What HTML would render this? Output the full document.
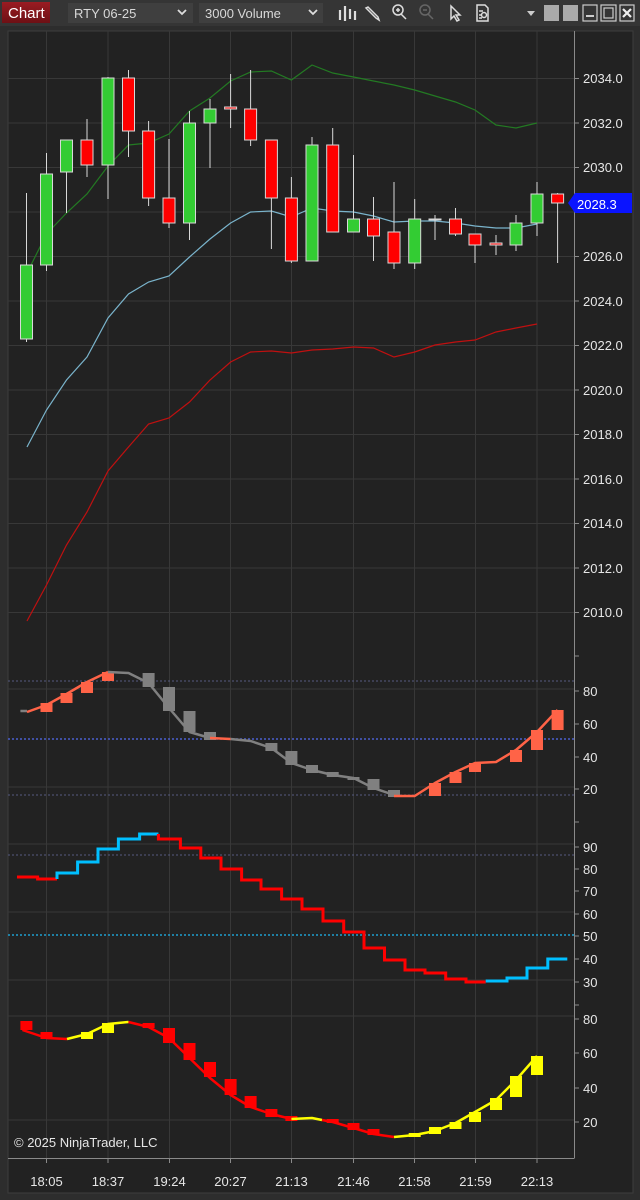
<!DOCTYPE html>
<html><head><meta charset="utf-8"><style>
html,body{margin:0;padding:0;width:640px;height:1200px;overflow:hidden;background:#2c2c2c;font-family:"Liberation Sans",sans-serif}
svg{display:block}
</style></head><body>
<svg width="640" height="1200" viewBox="0 0 640 1200" xmlns="http://www.w3.org/2000/svg" font-family="Liberation Sans, sans-serif">
<rect x="0" y="0" width="640" height="1200" fill="#2d2d2d"/>
<!-- toolbar -->
<rect x="0" y="0" width="640" height="26" fill="#353535"/>
<defs><linearGradient id="cg" x1="0" y1="0" x2="0" y2="1"><stop offset="0" stop-color="#9a1c22"/><stop offset="1" stop-color="#6e1015"/></linearGradient></defs>
<rect x="2" y="2" width="48" height="21" fill="url(#cg)"/>
<text x="8" y="18" font-size="15" fill="#fff">Chart</text>
<rect x="68" y="3" width="125" height="20" fill="#3f3f3f"/>
<text x="74" y="18" font-size="13" fill="#d8d8d8">RTY 06-25</text>
<path d="M178 10 l4 4 l4 -4" stroke="#ddd" stroke-width="1.8" fill="none"/>
<rect x="199" y="3" width="124" height="20" fill="#3f3f3f"/>
<text x="205" y="18" font-size="13" fill="#d8d8d8">3000 Volume</text>
<path d="M309 10 l4 4 l4 -4" stroke="#ddd" stroke-width="1.8" fill="none"/>
<g stroke="#ddd" fill="none" stroke-width="1.5">
<path d="M340 10v10M345 6v15M350 9v10M355 11v9" stroke-width="2.2"/>
<path d="M366 8l10 10l3 2l-1-3l-10-10z"/>
<circle cx="398" cy="10" r="5"/><path d="M401 14l5 5M396 10h4M398 8v4"/>
<g stroke="#666"><circle cx="425" cy="10" r="5"/><path d="M428 14l5 5M423 10h4"/></g>
<path d="M451 6v13l3-3l3 5l2-1l-3-5h4z"/>
<path d="M477 5h8l3 3v13h-11z"/><circle cx="484" cy="15" r="2.5"/><path d="M479 11h4M479 15h2M479 18h3"/>
</g>
<path d="M527 11h8l-4 5z" fill="#ccc"/>
<rect x="544" y="5" width="15" height="16" fill="#aaa"/>
<rect x="563" y="5" width="15" height="16" fill="#aaa"/>
<rect x="583" y="5" width="14" height="16" fill="none" stroke="#ccc" stroke-width="1.2"/><path d="M586 16h8" stroke="#ccc" stroke-width="2"/>
<rect x="601" y="5" width="15" height="16" fill="none" stroke="#ccc" stroke-width="1.2"/><rect x="604" y="8" width="9" height="10" fill="none" stroke="#ccc" stroke-width="1.2"/>
<rect x="620" y="5" width="14" height="16" fill="none" stroke="#ccc" stroke-width="1.2"/><path d="M623 9l8 8M631 9l-8 8" stroke="#eee" stroke-width="2.2"/>
<!-- chart frame -->
<rect x="8" y="31" width="625" height="1162" fill="#222222" stroke="#3d3d3d" stroke-width="1"/>
<!-- vertical grid -->
<g stroke="#383838" stroke-width="1">
<path d="M46.5 31V1158M108 31V1158M169.5 31V1158M230.5 31V1158M291.5 31V1158M353.5 31V1158M414.5 31V1158M475.5 31V1158M537 31V1158"/>
<!-- horizontal grid main -->
<path d="M8 78.5H574M8 123H574M8 167.5H574M8 212H574M8 256.5H574M8 301H574M8 345.5H574M8 390H574M8 434.5H574M8 479H574M8 523.5H574M8 568H574M8 612.5H574"/>
<path d="M8 689H574M8 787H574M8 844H574M8 912H574M8 980H574M8 1016H574M8 1120H574"/>
</g>
<path d="M574.5 31V1158M8 1158.5H574.5" stroke="#8a8a8a" stroke-width="1"/>
<!-- axis ticks -->
<g stroke="#8a8a8a"><path d="M574 78.5h5M574 123h5M574 167.5h5M574 212h5M574 256.5h5M574 301h5M574 345.5h5M574 390h5M574 434.5h5M574 479h5M574 523.5h5M574 568h5M574 612.5h5M574 656h5M574 691h5M574 724h5M574 757h5M574 789h5M574 822h5M574 847h5M574 869h5M574 891h5M574 914h5M574 936h5M574 959h5M574 982h5M574 1005h5M574 1019h5M574 1053h5M574 1088h5M574 1122h5"/>
<path d="M46.5 1158v5M108 1158v5M169.5 1158v5M230.5 1158v5M291.5 1158v5M353.5 1158v5M414.5 1158v5M475.5 1158v5M537 1158v5"/></g>
<g font-size="13" fill="#e6e6e6">
<text x="583" y="83">2034.0</text><text x="583" y="128">2032.0</text><text x="583" y="172">2030.0</text>
<text x="583" y="261">2026.0</text><text x="583" y="306">2024.0</text><text x="583" y="350">2022.0</text><text x="583" y="395">2020.0</text>
<text x="583" y="439">2018.0</text><text x="583" y="484">2016.0</text><text x="583" y="528">2014.0</text><text x="583" y="573">2012.0</text><text x="583" y="617">2010.0</text>
<text x="583" y="696">80</text><text x="583" y="729">60</text><text x="583" y="762">40</text><text x="583" y="794">20</text>
<text x="583" y="852">90</text><text x="583" y="874">80</text><text x="583" y="896">70</text><text x="583" y="919">60</text><text x="583" y="941">50</text><text x="583" y="964">40</text><text x="583" y="987">30</text>
<text x="583" y="1024">80</text><text x="583" y="1058">60</text><text x="583" y="1093">40</text><text x="583" y="1127">20</text>
</g>
<g font-size="13" fill="#e6e6e6" text-anchor="middle">
<text x="46.5" y="1186">18:05</text><text x="108" y="1186">18:37</text><text x="169.5" y="1186">19:24</text><text x="230.5" y="1186">20:27</text><text x="291.5" y="1186">21:13</text><text x="353.5" y="1186">21:46</text><text x="414.5" y="1186">21:58</text><text x="475.5" y="1186">21:59</text><text x="537" y="1186">22:13</text>
</g>
<!-- bands -->
<polyline fill="none" stroke="#237a23" stroke-width="1.2" points="27,273 46.5,234 66.5,213 87,194 108,166 128.5,145 148.6,143 169,134 189.5,111 210,98 230.6,81 250.6,72 271.4,71 291.4,80 312,65 332.7,73 353.5,77 373.5,81 394,85 414.7,90 435,96 455.5,102 475,110 496,125 516,128 537,123"/>
<polyline fill="none" stroke="#7ab4cc" stroke-width="1.2" points="27,447 46.5,410 66.5,380 87,357 108,318 128.5,294 148.6,282 169,276 189.5,257 210,239 230.6,223 250.6,212 271.4,211 291.4,217 312,208 332.7,211 353.5,212 373.5,216 394,222 414.7,221 435,221 455.5,223 475,226 496,228 516,228 537,224"/>
<polyline fill="none" stroke="#c01010" stroke-width="1.2" points="27,621 46.5,585 66.5,545 87,512 108,471 128.5,447 148.6,424 169,418 189.5,402 210,380 230.6,362 250.6,352 271.4,351 291.4,353 312,350 332.7,349 353.5,347 373.5,348 394,357 414.7,352 435,345 455.5,342 475,340 496,332 516,328 537,324"/>
<!-- candles -->
<g stroke="#d8d8d8" stroke-width="1">
<path d="M26.5 193V342M46.5 153V271M66.5 140V213M87 119V177M108 77V199M128.5 70V157M148.6 121V206M169 139V228M189.5 111V240M210 99V168M230.6 74V128M250.6 70V146M271.4 140V249M291.4 177V263M312 137V261M332.7 128V232M353.5 155V232M373.5 197V261M394 182V269M414.7 199V269M435 215V240M455.5 208V236M475 234V263M496 235V255M516 215V251M537 182V236M557.6 193V263"/>
<g fill="#33cc33"><rect x="20.5" y="265" width="12" height="74"/><rect x="40.5" y="174" width="12" height="91"/><rect x="60.5" y="140" width="12" height="32"/><rect x="102" y="78" width="12" height="87"/><rect x="183.5" y="123" width="12" height="100"/><rect x="204" y="109" width="12" height="14"/><rect x="306" y="145" width="12" height="116"/><rect x="347.5" y="219" width="12" height="13"/><rect x="408.7" y="219" width="12" height="44"/><rect x="429" y="219" width="12" height="1"/><rect x="510" y="223" width="12" height="22"/><rect x="531" y="194" width="12" height="29"/></g>
<g fill="#ff0000"><rect x="81" y="140" width="12" height="25"/><rect x="122.5" y="78" width="12" height="53"/><rect x="142.6" y="131" width="12" height="67"/><rect x="163" y="198" width="12" height="25"/><rect x="224.6" y="107" width="12" height="2"/><rect x="244.6" y="109" width="12" height="31"/><rect x="265.4" y="140" width="12" height="58"/><rect x="285.4" y="198" width="12" height="63"/><rect x="326.7" y="145" width="12" height="87"/><rect x="367.5" y="219" width="12" height="17"/><rect x="388" y="232" width="12" height="31"/><rect x="449.5" y="219" width="12" height="15"/><rect x="469" y="234" width="12" height="11"/><rect x="490" y="243" width="12" height="2"/><rect x="551.6" y="194" width="12" height="9"/></g>
</g>
<!-- price marker -->
<path d="M568 203l7-10h57v20h-57z" fill="#0a14ff"/>
<text x="577" y="209" font-size="13" fill="#fff">2028.3</text>
<!-- panel 2 -->
<g stroke-width="1" fill="none"><path d="M8 681H574M8 795H574" stroke="#555a80" stroke-dasharray="2,2"/><path d="M8 739H574" stroke="#4a5fd0" stroke-width="1.5" stroke-dasharray="2,2"/></g>
<g fill="#ff6347"><rect x="40.5" y="703" width="12" height="9"/><rect x="60.5" y="693" width="12" height="10"/><rect x="81" y="682" width="12" height="11"/><rect x="102" y="672" width="12" height="9"/><rect x="429" y="783" width="12" height="13"/><rect x="449.5" y="772" width="12" height="11"/><rect x="469" y="763" width="12" height="9"/><rect x="510" y="750" width="12" height="12"/><rect x="531" y="730" width="12" height="20"/><rect x="551.6" y="710" width="12" height="20"/></g>
<g fill="#808080"><rect x="142.6" y="673" width="12" height="14"/><rect x="163" y="687" width="12" height="24"/><rect x="183.5" y="711" width="12" height="21"/><rect x="204" y="732" width="12" height="8"/><rect x="265.4" y="743" width="12" height="8"/><rect x="285.4" y="751" width="12" height="14"/><rect x="306" y="765" width="12" height="8"/><rect x="326.7" y="772" width="12" height="5"/><rect x="347.5" y="777" width="12" height="3"/><rect x="367.5" y="779" width="12" height="11"/><rect x="388" y="790" width="12" height="7"/></g>
<g fill="none" stroke-width="2.5" stroke-linejoin="round">
<polyline stroke="#808080" points="20.4,711 27,711"/>
<polyline stroke="#ff6347" points="27,712 46.5,705 66.5,694 87,682 108,672"/>
<polyline stroke="#808080" points="108,672 128.5,673 148.6,683 169,708 189.5,732 210,738"/>
<polyline stroke="#ff6347" points="210,738 230.6,739"/>
<polyline stroke="#808080" points="230.6,739 250.6,741 271.4,748 291.4,763 312,770 332.7,775 353.5,778 373.5,788 394,795"/>
<polyline stroke="#ff6347" points="394,796 414.7,796 435,783 455.5,772 475,763 496,762 516,750 537,732 557.6,710"/>
</g>
<!-- panel 3 -->
<path d="M8 855H574" stroke="#555a80" stroke-dasharray="2,2"/>
<path d="M8 935H574" stroke="#1ea0d0" stroke-width="1.5" stroke-dasharray="2,2"/>
<g fill="none" stroke-width="3">
<path stroke="#ff0000" d="M17 877H37.6V879H57"/>
<path stroke="#00bfff" d="M57 879V873H77.6V862H98V849H118.4V839H139.6V834H158.4"/>
<path stroke="#ff0000" d="M158.4 834V839H180.4V848H200.8V858H221V869H241.6V880H261V889H281.6V899H302V909H323V921H343.7V932H364V948H384.5V960H405V970H425V973H445.7V979H466V982H485.7"/>
<path stroke="#00bfff" d="M485.7 981H507V978H527V968H547.8V959H567.3"/>
</g>
<!-- panel 4 -->
<g fill="#ff0000"><rect x="20.4" y="1021" width="12" height="9"/><rect x="40.5" y="1032" width="12" height="7"/><rect x="142.6" y="1023" width="12" height="5"/><rect x="163" y="1028" width="12" height="15"/><rect x="183.5" y="1043" width="12" height="17"/><rect x="204" y="1062" width="12" height="15"/><rect x="224.6" y="1079" width="12" height="16"/><rect x="244.6" y="1096" width="12" height="12"/><rect x="265.4" y="1109" width="12" height="8"/><rect x="285.4" y="1116" width="12" height="5"/><rect x="326.7" y="1119" width="12" height="4"/><rect x="347.5" y="1123" width="12" height="7"/><rect x="367.5" y="1129" width="12" height="6"/></g>
<g fill="#ffff00"><rect x="81" y="1032" width="12" height="7"/><rect x="102" y="1023" width="12" height="10"/><rect x="408.7" y="1133" width="12" height="4"/><rect x="429" y="1127" width="12" height="7"/><rect x="449.5" y="1122" width="12" height="7"/><rect x="469" y="1112" width="12" height="10"/><rect x="490" y="1098" width="12" height="12"/><rect x="510" y="1076" width="12" height="21"/><rect x="531" y="1056" width="12" height="19"/></g>
<g fill="none" stroke-width="2.5" stroke-linejoin="round">
<polyline stroke="#ff0000" points="22.4,1030 46.5,1038 67,1039"/>
<polyline stroke="#ffff00" points="67,1039 87,1034 108,1024 128.5,1022"/>
<polyline stroke="#ff0000" points="128.5,1022 148.6,1027 169,1038 189.5,1058 210,1078 230.6,1095 250.6,1107 271.4,1114 291.4,1119"/>
<polyline stroke="#ffff00" points="291.4,1119 312,1118 322,1120"/>
<polyline stroke="#ff0000" points="322,1120 332.7,1122 353.5,1128 373.5,1134 394,1137"/>
<polyline stroke="#ffff00" points="394,1137 414.7,1135 435,1131 455.5,1123 475,1112 496,1100 516,1080 537,1056"/>
</g>
<text x="14" y="1147" font-size="13" fill="#e6e6e6">© 2025 NinjaTrader, LLC</text>
</svg>
</body></html>
